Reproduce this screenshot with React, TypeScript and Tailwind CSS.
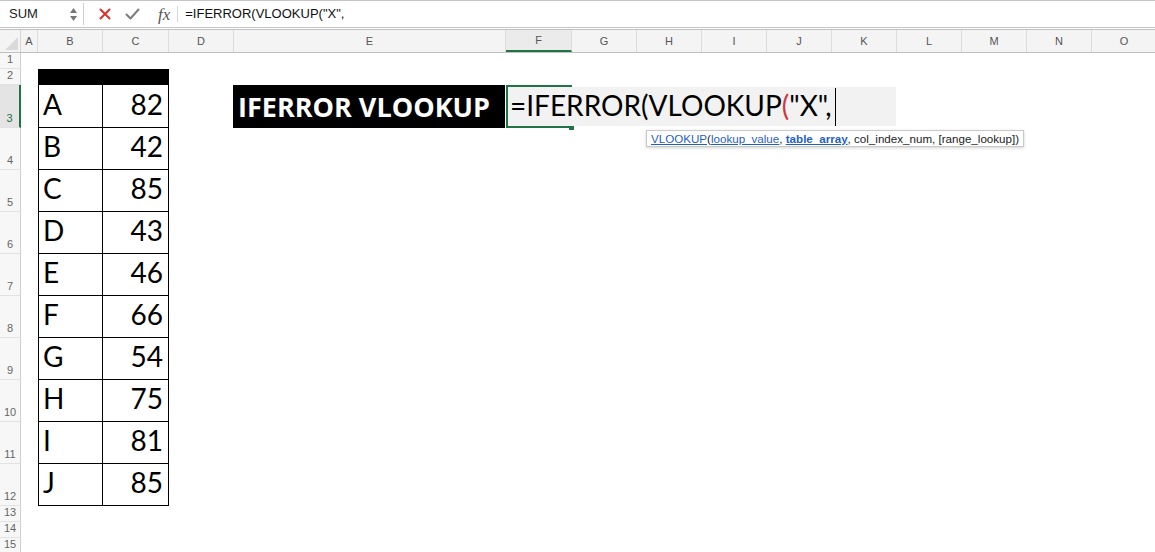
import { ReactNode } from "react";

const cols = [
  { l: "A", w: "w-[17px]" },
  { l: "B", w: "w-[65px]" },
  { l: "C", w: "w-[66px]" },
  { l: "D", w: "w-[65px]" },
  { l: "E", w: "w-[272px]" },
  { l: "F", w: "w-[66px]" },
  { l: "G", w: "w-[65px]" },
  { l: "H", w: "w-[65px]" },
  { l: "I", w: "w-[65px]" },
  { l: "J", w: "w-[65px]" },
  { l: "K", w: "w-[65px]" },
  { l: "L", w: "w-[65px]" },
  { l: "M", w: "w-[65px]" },
  { l: "N", w: "w-[65px]" },
  { l: "O", w: "w-[65px]" },
];

const data = [
  ["A", 82], ["B", 42], ["C", 85], ["D", 43], ["E", 46],
  ["F", 66], ["G", 54], ["H", 75], ["I", 81], ["J", 85],
];

const rows = [
  { n: 1, h: "h-[16px]" },
  { n: 2, h: "h-[16px]" },
  { n: 3, h: "h-[43px]" },
  { n: 4, h: "h-[42px]" },
  { n: 5, h: "h-[42px]" },
  { n: 6, h: "h-[42px]" },
  { n: 7, h: "h-[42px]" },
  { n: 8, h: "h-[42px]" },
  { n: 9, h: "h-[42px]" },
  { n: 10, h: "h-[42px]" },
  { n: 11, h: "h-[42px]" },
  { n: 12, h: "h-[42px]" },
  { n: 13, h: "h-[16px]" },
  { n: 14, h: "h-[16px]" },
  { n: 15, h: "h-[16px]" },
];

const cellFont = "font-['Lato','Open_Sans',sans-serif] text-[28px] leading-none";

function cellContent(r: number, c: number): ReactNode {
  if (r === 2 && (c === 1 || c === 2)) {
    return <div className="h-full w-full bg-black" />;
  }
  if (r >= 3 && r <= 12) {
    const [letter, num] = data[r - 3];
    if (c === 1) {
      return (
        <div className={`h-full w-full border-l border-r border-b border-black flex items-end pl-[4px] pb-[9px] ${cellFont}`}>
          {letter}
        </div>
      );
    }
    if (c === 2) {
      return (
        <div className={`h-full w-full border-r border-b border-black flex items-end justify-end pr-[5px] pb-[9px] ${cellFont}`}>
          {num}
        </div>
      );
    }
  }
  if (r === 3 && c === 4) {
    return (
      <div className="h-full w-full -ml-px bg-black flex items-end pl-[5px] pb-[8px] text-white font-['Open_Sans',sans-serif] font-bold text-[27px] leading-none">
        IFERROR VLOOKUP
      </div>
    );
  }
  if (r === 3 && c === 5) {
    return <div className="h-full w-full border-l-2 border-t-2 border-b-2 border-[#217346]" />;
  }
  return null;
}

function FormulaBar() {
  return (
    <div className="h-[28px] border-t border-b border-[#c4c4c4] bg-white flex items-center font-['Liberation_Sans',sans-serif]">
      <div className="w-[83px] h-[22px] ml-[1px] flex items-center justify-between pl-[8px] pr-[6px] border-r border-[#d0d0d0]">
        <span className="text-[13px] text-[#222]">SUM</span>
        <div className="flex flex-col items-center gap-[3px]">
          <svg width="7" height="5" viewBox="0 0 7 5"><path d="M3.5 0L7 5H0z" fill="#777" /></svg>
          <svg width="7" height="5" viewBox="0 0 7 5"><path d="M0 0h7L3.5 5z" fill="#777" /></svg>
        </div>
      </div>
      <div className="w-[12px]" />
      <svg width="12" height="12" viewBox="0 0 12 12" className="ml-[3px]">
        <path d="M1.5 1.5l9 9M10.5 1.5l-9 9" stroke="#d9322b" strokeWidth="2" strokeLinecap="round" />
      </svg>
      <svg width="15" height="12" viewBox="0 0 15 12" className="ml-[14px]">
        <path d="M1.5 6.5l4 4 8-9" stroke="#7d7d7d" strokeWidth="2" fill="none" strokeLinecap="round" strokeLinejoin="round" />
      </svg>
      <span className="ml-[18px] font-['Liberation_Serif',serif] italic text-[17px] text-[#555] leading-none">fx</span>
      <div className="ml-[7px] w-px h-[16px] bg-[#d6d6d6]" />
      <span className="ml-[7px] text-[13px] text-[#111]">=IFERROR(VLOOKUP("X",</span>
    </div>
  );
}

function ColumnHeader() {
  return (
    <div className="flex h-[24px] mt-[1px] border-t border-b border-[#bfbfbf] bg-[#f4f4f4] font-['Liberation_Sans',sans-serif] text-[11px] text-[#555]">
      <div className="w-[21px] shrink-0 border-r border-[#d6d6d6] flex items-end justify-end">
        <svg width="13" height="13" viewBox="0 0 13 13" className="mb-[2px] mr-[2px]">
          <path d="M13 0V13H0z" fill="#dadada" />
        </svg>
      </div>
      {cols.map((c) => (
        <div
          key={c.l}
          className={`${c.w} shrink-0 flex items-center justify-center border-r border-[#dcdcdc] ${
            c.l === "F" ? "border-b-2 border-b-[#217346] bg-[#ebebeb]" : ""
          }`}
        >
          {c.l}
        </div>
      ))}
    </div>
  );
}

export default function App() {
  return (
    <div className="w-[1155px] h-[552px] overflow-hidden bg-white">
      <FormulaBar />
      <ColumnHeader />
      <div className="flex flex-col">
        {rows.map((row) => (
          <div key={row.n} className={`relative flex ${row.h}`}>
            <div
              className={`w-[21px] shrink-0 flex items-end justify-center pb-[1px] font-['Liberation_Sans',sans-serif] text-[11px] border-b border-[#e2e2e2] ${
                row.n === 3
                  ? "bg-[#e4e4e4] border-r-2 border-r-[#217346] text-[#217346]"
                  : "bg-[#f7f7f7] border-r border-r-[#d0d0d0] text-[#666]"
              }`}
            >
              {row.n}
            </div>
            {cols.map((c, i) => (
              <div key={i} className={`${c.w} shrink-0 h-full`}>
                {cellContent(row.n, i)}
              </div>
            ))}
            {row.n === 3 && (
              <>
                <div className="absolute left-[508px] top-[2px] w-[388px] h-[39px] bg-[#f2f2f2] flex items-end pl-[2px] pb-[7px] font-['Lato',sans-serif] text-[28px] leading-none text-black">
                  <span>=IFERROR(VLOOKUP</span>
                  <span className="text-[#d4343f]">(</span>
                  <span>"X",</span>
                  <span className="w-px h-[38px] bg-black ml-[3px] mb-[-7px]" />
                </div>
                <div className="absolute left-[569px] top-[41px] w-[5px] h-[4px] bg-[#217346]" />
                <div className="absolute left-[646px] top-[45px] z-10 h-[17px] px-[4px] flex items-center bg-white border border-[#c9c9c9] shadow-[0_1px_3px_rgba(0,0,0,0.18)] font-['Liberation_Sans',sans-serif] text-[11.6px] text-[#222] whitespace-nowrap">
                  <span className="text-[#1f5fc4] underline">VLOOKUP</span>
                  <span>(</span>
                  <span className="text-[#1f5fc4] underline">lookup_value</span>
                  <span>,&nbsp;</span>
                  <span className="text-[#1f5fc4] underline font-bold">table_array</span>
                  <span>, col_index_num, [range_lookup])</span>
                </div>
              </>
            )}
          </div>
        ))}
      </div>
    </div>
  );
}
